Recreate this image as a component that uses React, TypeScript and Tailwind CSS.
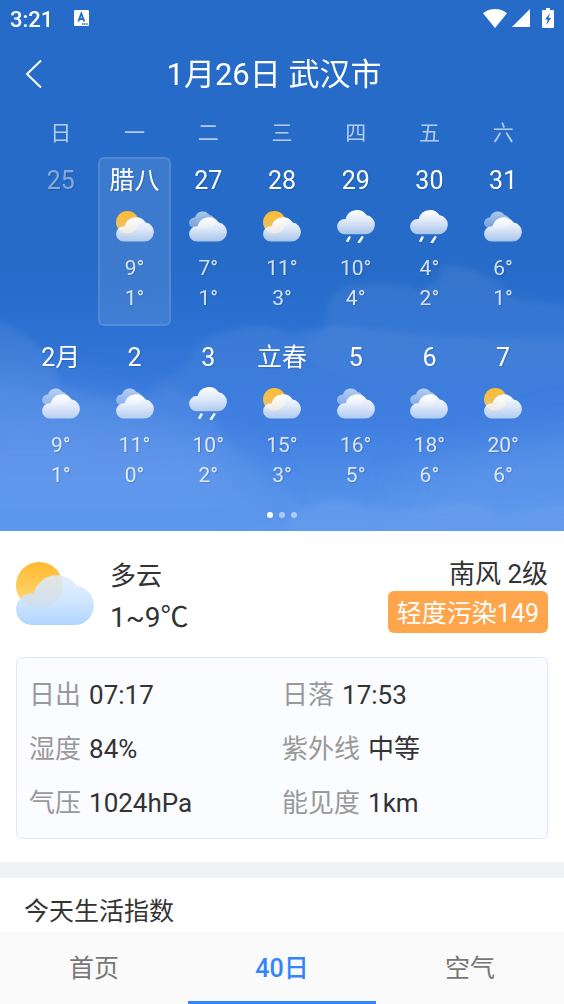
import { useState } from "react";
import clsx from "clsx";

type Weather = "partly" | "cloudy" | "rain";

type Day = {
  id: string;
  label: string;
  weather?: Weather;
  high?: number;
  low?: number;
};

const weekdays = ["日", "一", "二", "三", "四", "五", "六"];

const days: Day[] = [
  { id: "01-25", label: "25" },
  { id: "01-26", label: "腊八", weather: "partly", high: 9, low: 1 },
  { id: "01-27", label: "27", weather: "cloudy", high: 7, low: 1 },
  { id: "01-28", label: "28", weather: "partly", high: 11, low: 3 },
  { id: "01-29", label: "29", weather: "rain", high: 10, low: 4 },
  { id: "01-30", label: "30", weather: "rain", high: 4, low: 2 },
  { id: "01-31", label: "31", weather: "cloudy", high: 6, low: 1 },
  { id: "02-01", label: "2月", weather: "cloudy", high: 9, low: 1 },
  { id: "02-02", label: "2", weather: "cloudy", high: 11, low: 0 },
  { id: "02-03", label: "3", weather: "rain", high: 10, low: 2 },
  { id: "02-04", label: "立春", weather: "partly", high: 15, low: 3 },
  { id: "02-05", label: "5", weather: "cloudy", high: 16, low: 5 },
  { id: "02-06", label: "6", weather: "cloudy", high: 18, low: 6 },
  { id: "02-07", label: "7", weather: "partly", high: 20, low: 6 },
];

const details = [
  { name: "日出", value: "07:17" },
  { name: "日落", value: "17:53" },
  { name: "湿度", value: "84%" },
  { name: "紫外线", value: "中等" },
  { name: "气压", value: "1024hPa" },
  { name: "能见度", value: "1km" },
];

const tabs = ["首页", "40日", "空气"];

const cloudPath = "M15.8 63A15.8 15.8 0 0 1 15.8 31.4H17.7A24 24 0 0 1 61 24A19.6 19.6 0 0 1 58.4 63Z";

function Gradients() {
  return (
    <svg className="absolute h-0 w-0" aria-hidden="true">
      <defs>
        <linearGradient id="sun" x1="0" y1="0" x2="0" y2="1">
          <stop offset="0" stopColor="#ffb92e" />
          <stop offset="1" stopColor="#ffdb7d" />
        </linearGradient>
        <linearGradient id="sunSmall" x1="0" y1="0" x2="0" y2="1">
          <stop offset="0" stopColor="#fdbb33" />
          <stop offset="1" stopColor="#e6c470" />
        </linearGradient>
        <linearGradient id="cloud" x1="0" y1="0" x2="0" y2="1">
          <stop offset="0" stopColor="#fff" />
          <stop offset="0.5" stopColor="#f3f6fc" stopOpacity="0.88" />
          <stop offset="1" stopColor="#e6eefa" stopOpacity="0.68" />
        </linearGradient>
        <linearGradient id="cloudBack" x1="0" y1="0" x2="0" y2="1">
          <stop offset="0" stopColor="#fff" stopOpacity="0.62" />
          <stop offset="1" stopColor="#fff" stopOpacity="0.35" />
        </linearGradient>
        <linearGradient id="cloudBlue" x1="0" y1="0" x2="0" y2="1">
          <stop offset="0" stopColor="#dfecfc" stopOpacity="0.84" />
          <stop offset="0.5" stopColor="#cbe3fe" stopOpacity="0.88" />
          <stop offset="1" stopColor="#afd5ff" />
        </linearGradient>
      </defs>
    </svg>
  );
}

function WeatherIcon({ type }: { type: Weather }) {
  return (
    <svg viewBox="0 -4 78 70" className="h-[34px] w-[38px]" aria-hidden="true">
      {type === "partly" && <circle cx="23.3" cy="23.3" r="23.3" fill="url(#sunSmall)" />}
      {type === "cloudy" && (
        <path d={cloudPath} transform="translate(0 -8) scale(0.69)" fill="url(#cloudBack)" />
      )}
      {type === "rain" ? (
        <>
          <path d={cloudPath} transform="translate(0 -15)" fill="url(#cloud)" />
          <path d="M25.5 54.5l-4 7M52 54l-7 11" stroke="#fff" strokeWidth="5" strokeLinecap="round" />
        </>
      ) : (
        <path d={cloudPath} fill="url(#cloud)" />
      )}
    </svg>
  );
}

function Sky() {
  return (
    <svg viewBox="0 0 564 531" preserveAspectRatio="none" className="absolute inset-0 h-full w-full" aria-hidden="true">
      <defs>
        <filter id="soft" x="-20%" y="-20%" width="140%" height="140%">
          <feGaussianBlur stdDeviation="3" />
        </filter>
        <filter id="haze" x="-30%" y="-30%" width="160%" height="160%">
          <feGaussianBlur stdDeviation="22" />
        </filter>
        <linearGradient id="bank" x1="0" y1="0" x2="0" y2="1">
          <stop offset="0" stopColor="#fff" stopOpacity="0.07" />
          <stop offset="1" stopColor="#fff" stopOpacity="0" />
        </linearGradient>
      </defs>
      <g fill="url(#bank)" filter="url(#soft)">
        <path d="M300 350Q330 330 326 310Q332 286 355 285Q385 281 410 286L420 292L440 278V266Q465 262 480 273Q500 280 506 290Q512 302 540 301L590 308V390L420 400Q330 380 300 350Z" />
        <path d="M150 385Q190 370 195 350Q205 334 235 331Q262 320 290 335L340 325L420 335L590 340V430H240Q180 410 150 385Z" />
        <path d="M-20 318Q15 325 30 338Q55 360 60 385Q100 402 130 398L170 388Q205 400 220 430Q245 470 300 500V560H-20Z" />
        <path d="M290 518Q320 496 350 502Q390 515 430 508Q470 495 500 515L590 500V580H290Z" />
      </g>
      <g fill="#8fb9f5" filter="url(#haze)">
        <path opacity="0.24" d="M-40 370Q20 370 60 395Q120 400 190 425Q230 450 260 490L280 500H-40Z" />
        <path opacity="0.18" d="M400 490Q440 460 520 440L600 420V510H400Z" />
      </g>
    </svg>
  );
}

function StatusBar() {
  return (
    <div className="flex h-9 items-center px-[10px]">
      <span className="pt-[3px] text-[22px] leading-[33px] font-medium">3:21</span>
      <svg viewBox="0 0 15 16" className="ml-[21px] h-4 w-[15px]" aria-hidden="true">
        <rect width="15" height="16" rx="1.2" fill="#fff" />
        <path d="M4.3 11.5L7.3 3.6L10.4 11.5M5.4 9h3.9" stroke="#266bc8" strokeWidth="1.8" fill="none" />
        <path d="M8 14h6" stroke="#266bc8" strokeWidth="1.4" strokeDasharray="1.5 0.6" />
      </svg>
      <svg viewBox="0 0 24 19" className="ml-auto h-[19px] w-6" fill="#fff" aria-hidden="true">
        <path d="M12 19L0 4.3Q5 0 12 0T24 4.3Z" />
      </svg>
      <svg viewBox="0 0 18 18" className="ml-[5px] h-[18px] w-[18px]" fill="#fff" aria-hidden="true">
        <path d="M18 0V18H0Z" />
      </svg>
      <svg viewBox="0 0 12 20" className="ml-3 h-5 w-3" aria-hidden="true">
        <path d="M4 0h4v2h3q1 0 1 1v16q0 1-1 1H1q-1 0-1-1V3q0-1 1-1h3z" fill="#fff" />
        <path d="M8 5L3 11.5h2.8L4.2 17L9.2 10H6.6z" fill="#266bc8" />
      </svg>
    </div>
  );
}

function DayCell({ day, selected, onSelect }: { day: Day; selected: boolean; onSelect: () => void }) {
  return (
    <button
      type="button"
      onClick={onSelect}
      aria-pressed={selected}
      className={clsx(
        "flex min-h-[169px] flex-col items-center rounded-md border-2 pt-[2px] text-shadow-[1px_1px_1px_rgb(0_0_0/0.15)]",
        selected ? "border-white/10 bg-white/10" : "border-transparent",
      )}
    >
      <span className={clsx("text-[25px] leading-10", !day.weather && "text-white/45")}>{day.label}</span>
      {day.weather && (
        <>
          <span className="mt-2">
            <WeatherIcon type={day.weather} />
          </span>
          <span className="mt-[10px] text-[21px] leading-[30px] text-white/80">{day.high}°</span>
          <span className="text-[21px] leading-[30px] text-white/80">{day.low}°</span>
        </>
      )}
    </button>
  );
}

export default function App() {
  const [selected, setSelected] = useState("01-26");
  const [tab, setTab] = useState("40日");

  return (
    <div className="flex min-h-screen flex-col bg-white font-['Roboto','Noto_Sans_CJK_SC',sans-serif] text-[#333]">
      <Gradients />
      <header className="relative bg-linear-[180deg,#266bc8_0%,#266bc8_50%,#2c71d2_62%,#3d7ddf_78%,#5491ea_94%,#5c97ec_100%] text-white">
        <Sky />
        <div className="relative">
          <StatusBar />
          <div className="grid h-[78px] grid-cols-[68px_1fr_84px] items-center">
            <button type="button" aria-label="返回" className="flex h-full items-center pl-[25px]">
              <svg viewBox="0 0 17 30" className="h-[30px] w-[17px]" fill="none" stroke="#fff" strokeWidth="2" aria-hidden="true">
                <path d="M16 0.5L2 14L16 27.5" />
              </svg>
            </button>
            <h1 className="text-center text-[31px] leading-10">1月26日 武汉市</h1>
          </div>
          <div className="grid grid-cols-7 px-6 pb-[4px]">
            {weekdays.map((name) => (
              <span key={name} className="text-center text-[21px] leading-[39px] text-white/65">{name}</span>
            ))}
          </div>
          <div className="grid grid-cols-7 gap-y-2 px-6">
            {days.map((day) => (
              <DayCell key={day.id} day={day} selected={selected === day.id} onSelect={() => setSelected(day.id)} />
            ))}
          </div>
          <div className="flex justify-center gap-[6px] pt-[9px] pb-[13px]">
            <i className="size-[6px] rounded-full bg-white" />
            <i className="size-[6px] rounded-full bg-white/50" />
            <i className="size-[6px] rounded-full bg-white/50" />
          </div>
        </div>
      </header>

      <main className="flex-1">
        <section className="px-4 pt-[23px] pb-[23px]">
          <div className="flex items-start">
            <svg viewBox="0 0 78 63" className="mt-2 h-[63px] w-[78px]" aria-hidden="true">
              <circle cx="23.3" cy="23.3" r="23.3" fill="url(#sun)" />
              <path d={cloudPath} fill="url(#cloudBlue)" />
            </svg>
            <div className="ml-4 pt-[1px]">
              <p className="text-[26px] leading-[42px]">多云</p>
              <p className="text-[28px] leading-[42px]">1~9℃</p>
            </div>
            <div className="ml-auto flex flex-col items-end">
              <p className="pt-1 text-[26px] leading-[33px]">南风 2级</p>
              <p className="rounded-md bg-[#ffa54c] px-[9px] pt-[4px] text-[25px] leading-[38px] text-white">轻度污染149</p>
            </div>
          </div>
          <dl className="mt-[18px] grid grid-cols-2 rounded-md border border-[#dbe9ff] bg-[#fafcff] px-3 pt-[10px] pb-[8px] text-[26px] leading-[54px]">
            {details.map((item) => (
              <div key={item.name} className="flex gap-2">
                <dt className="text-[#999]">{item.name}</dt>
                <dd>{item.value}</dd>
              </div>
            ))}
          </dl>
        </section>
        <section className="border-t-16 border-[#f0f1f5] px-6">
          <h2 className="pt-[14px] text-[25px] leading-10">今天生活指数</h2>
        </section>
      </main>

      <nav className="sticky bottom-0 grid h-[72px] grid-cols-3 bg-[#fafafa]">
        {tabs.map((name) => (
          <button
            key={name}
            type="button"
            onClick={() => setTab(name)}
            className={clsx(
              "border-b-3 pt-1 text-[25px]",
              tab === name ? "border-[#3385ff] font-medium text-[#3385ff]" : "border-transparent text-[#777]",
            )}
          >
            {name}
          </button>
        ))}
      </nav>
    </div>
  );
}
